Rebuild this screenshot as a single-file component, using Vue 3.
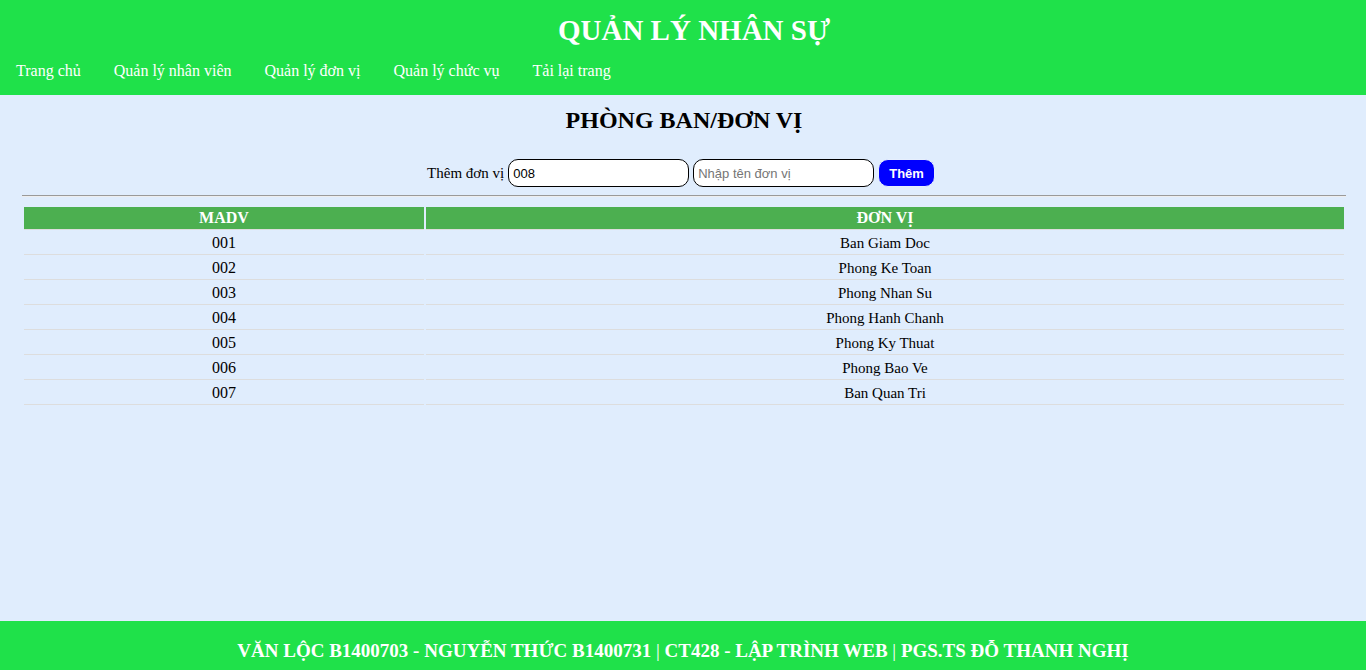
<script setup>
import { ref } from 'vue'

const links = ['Trang chủ', 'Quản lý nhân viên', 'Quản lý đơn vị', 'Quản lý chức vụ', 'Tải lại trang']

const units = ref([
  { id: '001', name: 'Ban Giam Doc' },
  { id: '002', name: 'Phong Ke Toan' },
  { id: '003', name: 'Phong Nhan Su' },
  { id: '004', name: 'Phong Hanh Chanh' },
  { id: '005', name: 'Phong Ky Thuat' },
  { id: '006', name: 'Phong Bao Ve' },
  { id: '007', name: 'Ban Quan Tri' },
])

const newId = ref('008')
const newName = ref('')

function addUnit() {
  if (!newName.value) return
  units.value.push({ id: newId.value, name: newName.value })
  newId.value = String(units.value.length + 1).padStart(3, '0')
  newName.value = ''
}
</script>

<template>
  <div class="page">
    <header class="header">
      <h1 class="title">QUẢN LÝ NHÂN SỰ</h1>
      <nav class="nav">
        <a v-for="link in links" :key="link" href="#">{{ link }}</a>
      </nav>
    </header>

    <main class="main">
      <h2 class="heading">PHÒNG BAN/ĐƠN VỊ</h2>
      <form class="form" @submit.prevent="addUnit">
        <label for="unit-id">Thêm đơn vị</label>
        <input id="unit-id" v-model="newId" type="text" />
        <input v-model="newName" type="text" placeholder="Nhập tên đơn vị" aria-label="Tên đơn vị" />
        <button type="submit">Thêm</button>
      </form>
      <hr class="rule" />
      <table class="table">
        <thead>
          <tr>
            <th class="code">MADV</th>
            <th>ĐƠN VỊ</th>
          </tr>
        </thead>
        <tbody>
          <tr v-for="unit in units" :key="unit.id">
            <td>{{ unit.id }}</td>
            <td class="name">{{ unit.name }}</td>
          </tr>
        </tbody>
      </table>
    </main>

    <footer class="footer">
      <b>VĂN LỘC B1400703 - NGUYỄN THỨC B1400731</b> | <b>CT428 - LẬP TRÌNH WEB</b> | <b>PGS.TS ĐỖ THANH NGHỊ</b>
    </footer>
  </div>
</template>

<style>
body {
  margin: 0;
  background: #e0edfd;
}
</style>

<style scoped>
.page {
  display: flex;
  flex-direction: column;
  min-height: 100vh;
  font-family: "Liberation Serif", "Times New Roman", serif;
  font-size: 16px;
  line-height: 18px;
  color: #000;
}
.header {
  background: #1fe14a;
  color: #fff;
  padding-top: 12px;
}
.title {
  margin: 0;
  padding-left: 22px;
  font-size: 29px;
  line-height: 36px;
  text-align: center;
}
.nav {
  display: flex;
  gap: 1px;
}
.nav a {
  padding: 14px 16px 15px;
  color: #fff;
  text-decoration: none;
}
.main {
  flex: 1;
  padding: 11px 20px 0 22px;
}
.heading {
  margin: 0;
  font-size: 24px;
  line-height: 28px;
  text-align: center;
}
.form {
  display: flex;
  justify-content: center;
  align-items: center;
  gap: 4px;
  margin-top: 25px;
  padding-right: 6px;
}
.form label {
  font-size: 15px;
}
.form input {
  box-sizing: border-box;
  width: 181px;
  height: 28px;
  padding: 0 4px;
  border: 1px solid #000;
  border-radius: 10px;
  background: #fff;
  font: 13px "Liberation Sans", Arial, sans-serif;
  color: #000;
}
.form input::placeholder {
  color: #757575;
}
.form button {
  height: 28px;
  padding: 0 10px;
  border: 1px solid #e6effd;
  border-radius: 10px;
  background: #00f;
  font: bold 13px "Liberation Sans", Arial, sans-serif;
  color: #fff;
}
.rule {
  margin: 8px 0;
  border: 0;
  border-top: 1px solid #9a9a9a;
  border-bottom: 1px solid #eee;
}
.table {
  width: 100%;
  border-collapse: separate;
  border-spacing: 2px;
  text-align: center;
}
.table th,
.table td {
  padding: 2px;
  border-bottom: 1px solid #ddd;
}
.table th {
  background: #4caf50;
  background-clip: padding-box;
  color: #fff;
}
.table .name {
  font-size: 15px;
}
.code {
  width: 30.35%;
}
.footer {
  padding: 20px 0 9px;
  background: #1fe14a;
  color: #fff;
  font-size: 19px;
  line-height: 20px;
  text-align: center;
}
</style>
